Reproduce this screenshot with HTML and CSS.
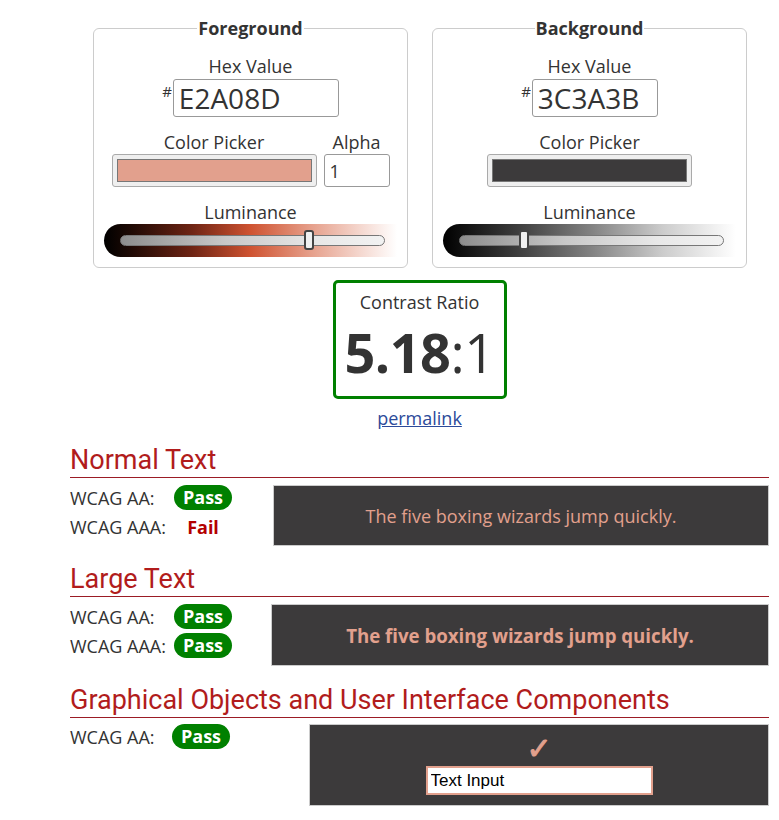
FILE: index.html
```html
<!DOCTYPE html>
<html lang="en">
<head>
<meta charset="utf-8">
<title>Contrast Checker</title>
<link rel="stylesheet" href="styles.css">
</head>
<body>
<div class="page">
  <div class="pickers">
    <fieldset class="panel">
      <legend>Foreground</legend>
      <div class="label">Hex Value</div>
      <div class="hexrow">
        <span class="hash">#</span>
        <input class="hex hex-fg" type="text" value="E2A08D" aria-label="Foreground hex">
      </div>
      <div class="pickrow">
        <div class="pickcol">
          <div class="label">Color Picker</div>
          <div class="swatch"><span class="swatch-fill fg-fill"></span></div>
        </div>
        <div class="pickcol">
          <div class="label">Alpha</div>
          <input class="alpha" type="text" value="1" aria-label="Alpha">
        </div>
      </div>
      <div class="label lum-label">Luminance</div>
      <div class="slider slider-fg">
        <div class="track">
          <span class="thumb" style="left: 71.5%"></span>
        </div>
      </div>
    </fieldset>
    <fieldset class="panel">
      <legend>Background</legend>
      <div class="label">Hex Value</div>
      <div class="hexrow">
        <span class="hash">#</span>
        <input class="hex hex-bg" type="text" value="3C3A3B" aria-label="Background hex">
      </div>
      <div class="pickrow">
        <div class="pickcol">
          <div class="label">Color Picker</div>
          <div class="swatch"><span class="swatch-fill bg-fill"></span></div>
        </div>
      </div>
      <div class="label lum-label">Luminance</div>
      <div class="slider slider-bg">
        <div class="track">
          <span class="thumb" style="left: 24.5%"></span>
        </div>
      </div>
    </fieldset>
  </div>

  <div class="ratio-wrap">
    <div class="ratio">
      <div class="ratio-title">Contrast Ratio</div>
      <div class="ratio-value"><b>5.18</b>:1</div>
    </div>
    <a class="permalink" href="#">permalink</a>
  </div>

  <section class="result">
    <h2>Normal Text</h2>
    <div class="result-body">
      <div class="grades grades-normal">
        <div class="grade"><span class="gname">WCAG AA:</span><span class="pass">Pass</span></div>
        <div class="grade"><span class="gname">WCAG AAA:</span><span class="fail">Fail</span></div>
      </div>
      <div class="sample sample-normal">The five boxing wizards jump quickly.</div>
    </div>
  </section>

  <section class="result result-large">
    <h2>Large Text</h2>
    <div class="result-body">
      <div class="grades grades-large">
        <div class="grade"><span class="gname">WCAG AA:</span><span class="pass">Pass</span></div>
        <div class="grade"><span class="gname">WCAG AAA:</span><span class="pass">Pass</span></div>
      </div>
      <div class="sample sample-large">The five boxing wizards jump quickly.</div>
    </div>
  </section>

  <section class="result result-ui">
    <h2>Graphical Objects and User Interface Components</h2>
    <div class="result-body">
      <div class="grades grades-ui">
        <div class="grade"><span class="gname gname-ui">WCAG AA:</span><span class="pass">Pass</span></div>
      </div>
      <div class="sample sample-ui">
        <span class="check">&#10003;</span>
        <input class="demo-input" type="text" value="Text Input" aria-label="Text Input">
      </div>
    </div>
  </section>
</div>
</body>
</html>
```

FILE: styles.css
```css
* { box-sizing: border-box; }

html, body {
  margin: 0;
  padding: 0;
  background: #fff;
}

body {
  font-family: "Open Sans", "Liberation Sans", sans-serif;
  color: #333;
  font-size: 18px;
}

.page {
  width: 779px;
  padding: 18px 10px 0 70px;
}

.pickers {
  display: flex;
  gap: 24px;
  padding-left: 23px;
}

.panel {
  width: 315px;
  margin: 0;
  padding: 0 0 10px;
  border: 1px solid #ccc;
  border-radius: 6px;
  display: flex;
  flex-direction: column;
  align-items: center;
  min-width: 0;
}

.panel legend {
  margin: 0 auto;
  padding: 0 1px;
  font-weight: 700;
  font-size: 18px;
  line-height: 20px;
  color: #333;
}

.label {
  font-size: 18px;
  line-height: 20px;
  color: #333;
  text-align: center;
}

.panel > .label:first-of-type {
  margin-top: 18px;
}

.hexrow {
  display: flex;
  align-items: flex-start;
  margin-top: 3px;
}

.hash {
  font-size: 15px;
  line-height: 15px;
  margin-top: 5px;
  margin-right: 1px;
  color: #333;
}

.hex {
  height: 38px;
  border: 1px solid #999;
  border-radius: 3px;
  font-family: "Open Sans", "Liberation Sans", sans-serif;
  font-size: 28px;
  color: #333;
  padding: 0 5px;
  background: #fff;
}

.hex-fg { width: 166px; }
.hex-bg { width: 126px; }

.pickrow {
  display: flex;
  gap: 7px;
  margin-top: 15px;
}

.pickcol {
  display: flex;
  flex-direction: column;
  align-items: center;
  gap: 2px;
}

.swatch {
  width: 205px;
  height: 33px;
  border: 1px solid #aaa;
  border-radius: 3px;
  background: #efefef;
  padding: 4px;
  display: flex;
}

.swatch-fill {
  flex: 1;
  border: 1px solid #777;
}

.fg-fill { background: #e2a08d; }
.bg-fill { background: #3c3a3b; }

.alpha {
  width: 66px;
  height: 33px;
  border: 1px solid #999;
  border-radius: 3px;
  font-family: "Open Sans", "Liberation Sans", sans-serif;
  font-size: 18px;
  color: #333;
  padding: 0 5px;
  background: #fff;
}

.lum-label {
  margin-top: 15px;
}

.slider {
  width: 293px;
  height: 33px;
  margin-top: 2px;
  border-radius: 17px 0 0 17px;
  padding: 0 12px 0 16px;
  display: flex;
  align-items: center;
}

.slider-fg {
  background: linear-gradient(to right, #000 0%, #1a0803 8%, #6e2414 30%, #cf5331 50%, #e59d88 70%, #f5d9d1 88%, #fff 100%);
}

.slider-bg {
  background: linear-gradient(to right, #000 0%, #3c3c3c 25%, #808080 50%, #cccccc 75%, #fff 100%);
}

.track {
  position: relative;
  flex: 1;
  height: 11px;
  border: 1px solid #777;
  border-radius: 6px;
  background: linear-gradient(to right, #8d8d8d, #c8c8c8 40%, #e8e8e8 75%, #f2f2f2);
}

.thumb {
  position: absolute;
  top: -6px;
  width: 10px;
  height: 20px;
  margin-left: -5px;
  border: 2px solid #444;
  border-radius: 3px;
  background: #f0f0f0;
}

.ratio-wrap {
  display: flex;
  flex-direction: column;
  align-items: center;
  margin-top: 12px;
}

.ratio {
  width: 174px;
  height: 119px;
  border: 3px solid #008000;
  border-radius: 5px;
  text-align: center;
}

.ratio-title {
  font-size: 18px;
  line-height: 20px;
  margin-top: 9px;
  color: #333;
}

.ratio-value {
  font-size: 54px;
  line-height: 70px;
  margin-top: 5px;
  color: #333;
  letter-spacing: -0.5px;
}

.ratio-value b { font-weight: 700; }

.permalink {
  font-size: 18px;
  line-height: 24px;
  margin-top: 7px;
  color: #2c4a9a;
}

.result {
  margin-top: 15px;
}

.result-large { margin-top: 18px; }
.result-ui { margin-top: 19px; }

.result h2 {
  margin: 0;
  font-family: Roboto, "Liberation Sans", sans-serif;
  font-weight: 400;
  font-size: 27px;
  line-height: 30px;
  color: #b11c1c;
  border-bottom: 1px solid #9b1c25;
  padding-bottom: 2px;
}

.result-body {
  display: flex;
  margin-top: 7px;
}

.result-ui .result-body { margin-top: 6px; }

.grades {
  display: flex;
  flex-direction: column;
  gap: 4px;
}

.grades-normal { width: 203px; }
.grades-large { width: 201px; }
.grades-ui { width: 239px; }

.grade {
  display: flex;
  align-items: center;
  height: 25px;
}

.gname {
  width: 104px;
  font-size: 18px;
  color: #333;
}

.gname-ui { width: 102px; }

.pass {
  display: inline-block;
  width: 58px;
  height: 25px;
  line-height: 25px;
  border-radius: 13px;
  background: #008000;
  color: #fff;
  font-weight: 700;
  font-size: 18px;
  text-align: center;
}

.fail {
  width: 58px;
  text-align: center;
  color: #b30000;
  font-weight: 700;
  font-size: 18px;
}

.sample {
  flex: 1;
  background: #3c3a3b;
  border: 1px solid #ccc;
  color: #e2a08d;
  display: flex;
  align-items: center;
  justify-content: center;
}

.sample-normal {
  height: 61px;
  font-size: 18px;
}

.sample-large {
  height: 62px;
  font-size: 18.66px;
  font-weight: 700;
}

.sample-ui {
  height: 82px;
  flex-direction: column;
  justify-content: flex-start;
}

.check {
  font-family: "DejaVu Sans", sans-serif;
  font-weight: 700;
  font-size: 30px;
  line-height: 30px;
  color: #e2a08d;
  margin-top: 9px;
  -webkit-text-stroke: 1px #e2a08d;
}

.demo-input {
  width: 227px;
  height: 29px;
  border: 2px solid #e2a08d;
  background: #fff;
  font-family: "Liberation Sans", Arial, sans-serif;
  font-size: 17px;
  color: #000;
  padding: 0 3px;
  margin-top: 2px;
}
```
